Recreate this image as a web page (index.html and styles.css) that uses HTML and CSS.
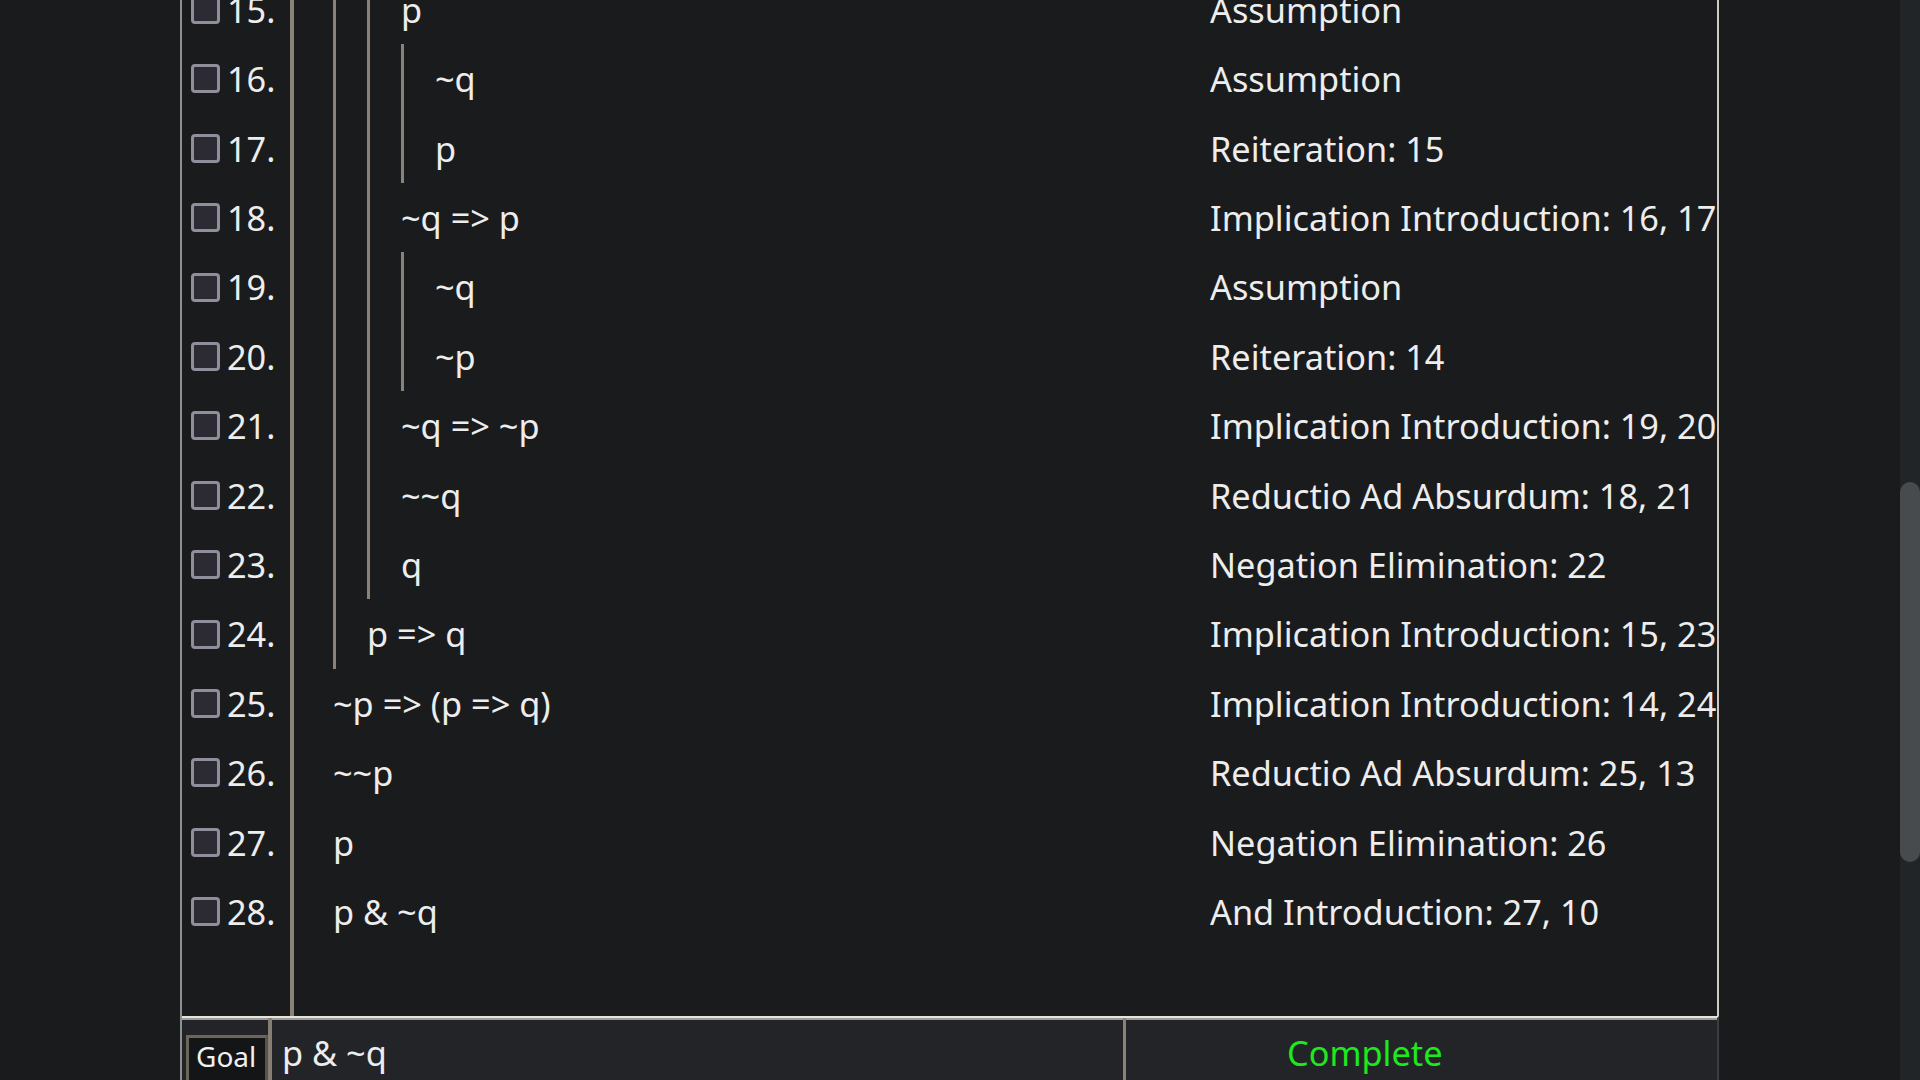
FILE: index.html
```html
<!DOCTYPE html>
<html>
<head>
<meta charset="utf-8">
<title>Proof</title>
<link rel="stylesheet" href="styles.css">
</head>
<body>
<div class="app">
  <div class="main">
    <div class="panel">
      <div class="proof">
        <div class="numcol">
          <div class="list">
            <div class="num"><span class="cb"></span><span>14.</span></div>
            <div class="num"><span class="cb"></span><span>15.</span></div>
            <div class="num"><span class="cb"></span><span>16.</span></div>
            <div class="num"><span class="cb"></span><span>17.</span></div>
            <div class="num"><span class="cb"></span><span>18.</span></div>
            <div class="num"><span class="cb"></span><span>19.</span></div>
            <div class="num"><span class="cb"></span><span>20.</span></div>
            <div class="num"><span class="cb"></span><span>21.</span></div>
            <div class="num"><span class="cb"></span><span>22.</span></div>
            <div class="num"><span class="cb"></span><span>23.</span></div>
            <div class="num"><span class="cb"></span><span>24.</span></div>
            <div class="num"><span class="cb"></span><span>25.</span></div>
            <div class="num"><span class="cb"></span><span>26.</span></div>
            <div class="num"><span class="cb"></span><span>27.</span></div>
            <div class="num"><span class="cb"></span><span>28.</span></div>
          </div>
        </div>
        <div class="body">
          <div class="list">
            <div class="sub">
              <div class="line"><div class="f">~p</div><div class="j">Assumption</div></div>
              <div class="sub">
                <div class="line"><div class="f">p</div><div class="j">Assumption</div></div>
                <div class="sub">
                  <div class="line"><div class="f">~q</div><div class="j">Assumption</div></div>
                  <div class="line"><div class="f">p</div><div class="j">Reiteration: 15</div></div>
                </div>
                <div class="line"><div class="f">~q =&gt; p</div><div class="j">Implication Introduction: 16, 17</div></div>
                <div class="sub">
                  <div class="line"><div class="f">~q</div><div class="j">Assumption</div></div>
                  <div class="line"><div class="f">~p</div><div class="j">Reiteration: 14</div></div>
                </div>
                <div class="line"><div class="f">~q =&gt; ~p</div><div class="j">Implication Introduction: 19, 20</div></div>
                <div class="line"><div class="f">~~q</div><div class="j">Reductio Ad Absurdum: 18, 21</div></div>
                <div class="line"><div class="f">q</div><div class="j">Negation Elimination: 22</div></div>
              </div>
              <div class="line"><div class="f">p =&gt; q</div><div class="j">Implication Introduction: 15, 23</div></div>
            </div>
            <div class="line"><div class="f">~p =&gt; (p =&gt; q)</div><div class="j">Implication Introduction: 14, 24</div></div>
            <div class="line"><div class="f">~~p</div><div class="j">Reductio Ad Absurdum: 25, 13</div></div>
            <div class="line"><div class="f">p</div><div class="j">Negation Elimination: 26</div></div>
            <div class="line"><div class="f">p &amp; ~q</div><div class="j">And Introduction: 27, 10</div></div>
          </div>
        </div>
      </div>
      <div class="bottom">
        <div class="goalcell"><span class="goal">Goal</span></div>
        <div class="goaltext">p &amp; ~q</div>
        <div class="status">Complete</div>
      </div>
    </div>
  </div>
  <div class="scrollbar"><div class="thumb"></div></div>
</div>
</body>
</html>
```
FILE: styles.css
```css
html, body {
  margin: 0;
  padding: 0;
  height: 1080px;
  overflow: hidden;
  background: #1a1b1d;
  color: #ededed;
  font-family: "Noto Sans", "Open Sans", sans-serif;
  font-size: 34.3px;
}

.app {
  display: flex;
  height: 1080px;
}

.main {
  flex: 1;
  display: flex;
  padding: 0 181px 0 180px;
}

.panel {
  flex: 1;
  display: flex;
  flex-direction: column;
  border-left: 2px solid #8c9093;
  overflow: hidden;
}

.proof {
  height: 1016px;
  flex: none;
  display: flex;
  overflow: hidden;
  border-right: 2px solid #cfcac1;
}

.list {
  margin-top: -94.5px;
}

.numcol {
  width: 108px;
  flex: none;
  border-right: 4px solid #8a8276;
}

.num {
  height: 69.4px;
  display: flex;
  align-items: center;
  padding-left: 9px;
  gap: 7px;
  line-height: 69.4px;
}

.cb {
  width: 23px;
  height: 23px;
  border: 3px solid #918e9b;
  border-radius: 4px;
  background: #2c2a33;
  flex: none;
}

.body {
  flex: 1;
  padding-left: 39px;
  min-width: 0;
}

.sub {
  border-left: 3px solid #8a8276;
  padding-left: 31px;
}

.line {
  display: flex;
  height: 69.4px;
  line-height: 69.4px;
  white-space: nowrap;
}

.f {
  flex: 1;
  min-width: 0;
}

.j {
  width: 507px;
  flex: none;
  overflow: hidden;
}

.bottom {
  flex: none;
  height: 64px;
  display: flex;
  background: #222427;
  border-top: 2px solid #e7e4dd;
  box-shadow: inset 0 2px 0 #9e9d9a;
  border-right: 2px solid #3b3e41;
  overflow: hidden;
}

.goalcell {
  width: 82px;
  padding: 17px 0 0 4px;
  border-right: 4px solid #857e72;
  flex: none;
}

.goal {
  display: block;
  box-sizing: border-box;
  width: 82px;
  height: 54px;
  border: 3px solid;
  border-color: #6c665a #59534a #59534a #6c665a;
  background: #141517;
  color: #f0f0f0;
  font-size: 28px;
  line-height: 36px;
  padding-left: 7px;
}

.goaltext {
  width: 841px;
  padding: 4px 0 0 10px;
  line-height: 62px;
  border-right: 3px solid #8a8276;
  flex: none;
  white-space: nowrap;
}

.status {
  flex: 1;
  padding: 4px 0 0 161px;
  line-height: 62px;
  color: #1ee81e;
}

.scrollbar {
  width: 20px;
  flex: none;
  background: #222527;
  padding-top: 482px;
  box-sizing: border-box;
}

.thumb {
  height: 380px;
  background: #474b4e;
  border-radius: 10px;
}
```
